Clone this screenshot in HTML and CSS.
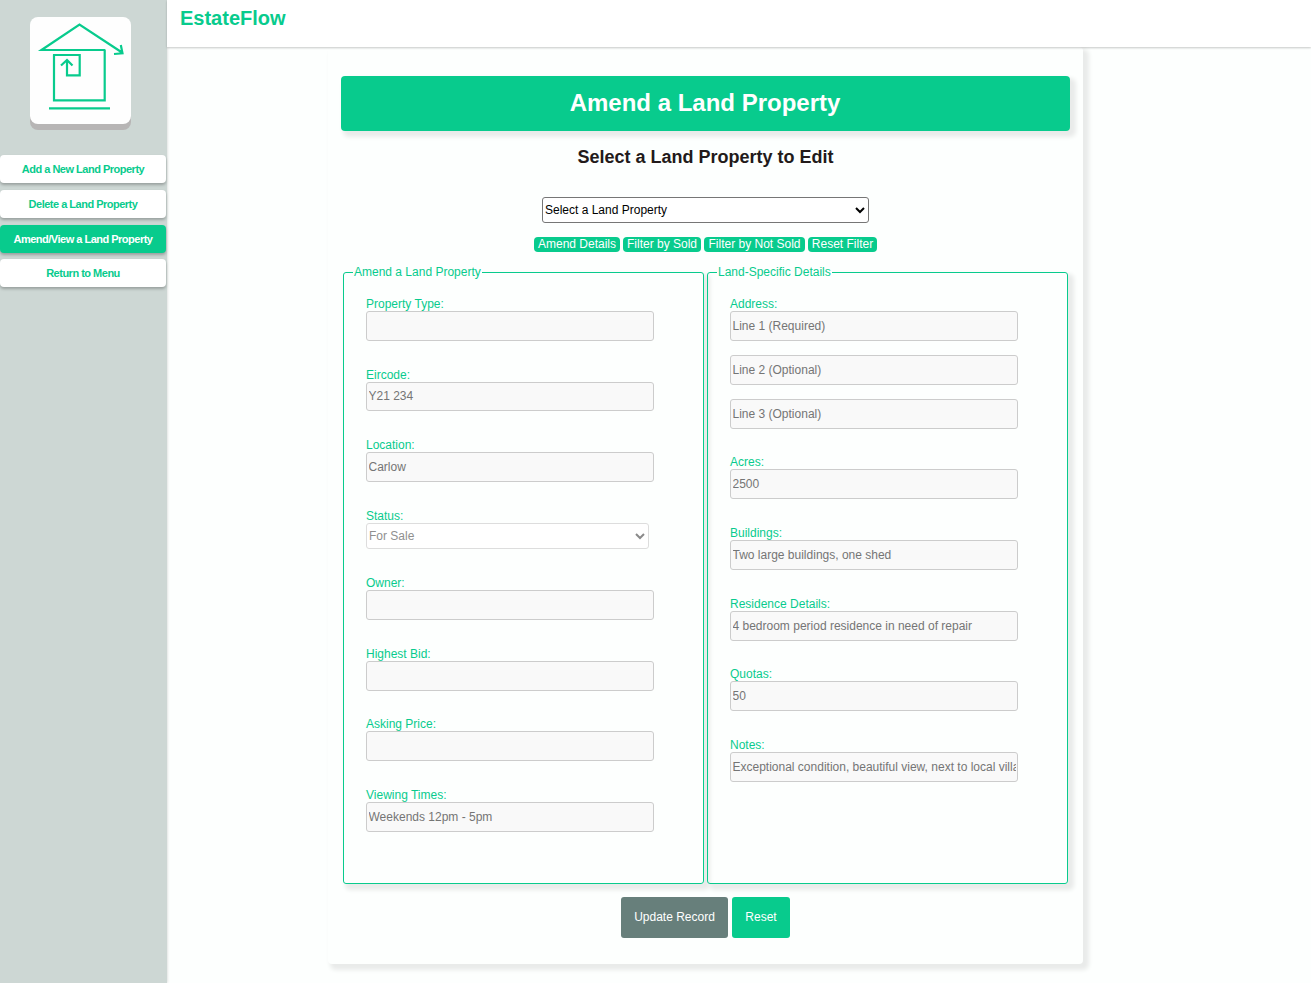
FILE: index.html
```
<!DOCTYPE html>
<html lang="en">
<head>
<meta charset="utf-8">
<title>EstateFlow</title>
<link rel="stylesheet" href="styles.css">
</head>
<body>
<div class="app">
  <aside class="sidebar">
    <div class="logo">
      <svg width="101" height="107" viewBox="30 17 101 107" fill="none" stroke="#08cb8d" stroke-width="2.2">
        <path d="M105 50H41.500L79.500 24.500L122 52.500M120.800 45L122.500 53.300L114 54"/>
        <path d="M54 54.500V100.300H104.700V49.500"/>
        <path d="M53 55H79.700V75.300H67V61M61 65.500L67 60L72.500 65.500"/>
        <path d="M49 108.400H110"/>
      </svg>
    </div>
    <nav class="nav">
      <a class="nav-item">Add a New Land Property</a>
      <a class="nav-item">Delete a Land Property</a>
      <a class="nav-item active">Amend/View a Land Property</a>
      <a class="nav-item last">Return to Menu</a>
    </nav>
  </aside>
  <div class="content">
    <header class="header"><span class="brand">EstateFlow</span></header>
    <main class="card">
      <h1 class="banner">Amend a Land Property</h1>
      <h2 class="subtitle">Select a Land Property to Edit</h2>
      <div class="select-wrap picker-wrap">
        <select class="picker"><option>Select a Land Property</option></select>
        <svg class="chevron" width="10" height="7" viewBox="0 0 10 7" fill="none" stroke="#000" stroke-width="2"><path d="M1 1L5 5L9 1"/></svg>
      </div>
      <div class="filters">
        <button class="chip chip-amend">Amend Details</button>
        <button class="chip chip-sold">Filter by Sold</button>
        <button class="chip chip-notsold">Filter by Not Sold</button>
        <button class="chip chip-reset">Reset Filter</button>
      </div>
      <div class="panels">
        <fieldset class="panel">
          <legend>Amend a Land Property</legend>
          <div class="field"><label>Property Type:</label><input disabled></div>
          <div class="field"><label>Eircode:</label><input class="short" value="Y21 234" disabled></div>
          <div class="field"><label>Location:</label><input value="Carlow" disabled></div>
          <div class="field field-select"><label>Status:</label>
            <div class="select-wrap status-wrap">
              <select class="status" disabled><option>For Sale</option></select>
              <svg class="chevron" width="10" height="7" viewBox="0 0 10 7" fill="none" stroke="#8a8a8a" stroke-width="2"><path d="M1 1L5 5L9 1"/></svg>
            </div>
          </div>
          <div class="field"><label>Owner:</label><input disabled></div>
          <div class="field"><label>Highest Bid:</label><input disabled></div>
          <div class="field"><label>Asking Price:</label><input disabled></div>
          <div class="field"><label>Viewing Times:</label><input value="Weekends 12pm - 5pm" disabled></div>
        </fieldset>
        <fieldset class="panel">
          <legend>Land-Specific Details</legend>
          <div class="field field-address"><label>Address:</label><input placeholder="Line 1 (Required)" disabled><input placeholder="Line 2 (Optional)" disabled><input placeholder="Line 3 (Optional)" disabled></div>
          <div class="field"><label>Acres:</label><input value="2500" disabled></div>
          <div class="field"><label>Buildings:</label><input value="Two large buildings, one shed" disabled></div>
          <div class="field"><label>Residence Details:</label><input value="4 bedroom period residence in need of repair" disabled></div>
          <div class="field"><label>Quotas:</label><input value="50" disabled></div>
          <div class="field"><label>Notes:</label><input value="Exceptional condition, beautiful view, next to local village" disabled></div>
        </fieldset>
      </div>
      <div class="actions">
        <button class="btn btn-update">Update Record</button>
        <button class="btn btn-reset">Reset</button>
      </div>
    </main>
  </div>
</div>
</body>
</html>
```
FILE: styles.css
```
* { box-sizing: border-box; }
body {
  margin: 0;
  font-family: "Liberation Sans", Arial, sans-serif;
  font-size: 12px;
  background: #fdfffe;
  overflow: hidden;
}
.app { display: flex; height: 983px; }
.sidebar {
  width: 167px;
  flex: none;
  background: #cdd7d4;
  box-shadow: 0 0 3px rgba(0, 0, 0, .2);
  padding-top: 17px;
}
.logo {
  width: 101px;
  height: 107px;
  margin-left: 30px;
  background: #fefefe;
  border-radius: 8px;
  box-shadow: 0 6px 0 #b7b5b5;
}
.logo svg { display: block; }
.nav { margin-top: 31px; display: flex; flex-direction: column; gap: 7px; }
.nav-item {
  width: 166px;
  height: 28px;
  line-height: 28px;
  text-align: center;
  font-size: 11px;
  font-weight: bold;
  letter-spacing: -.5px;
  color: #08cb8d;
  background: #fff;
  border-radius: 4px;
  box-shadow: 0 2px 3px rgba(0, 0, 0, .25);
}
.nav-item.active { color: #fff; background: #08cb8d; }
.nav-item.last { margin-top: -1px; }
.content { flex: 1; }
.header {
  position: relative;
  height: 47px;
  padding: 7px 13px;
  background: #fff;
  box-shadow: 0 1px 2px rgba(0, 0, 0, .22);
}
.brand { font-size: 20px; line-height: 22px; font-weight: bold; color: #08cb8d; }
.card {
  width: 755px;
  height: 917px;
  margin-left: 161px;
  padding: 29px 13px 0;
  display: flex;
  flex-direction: column;
  align-items: center;
  border-radius: 4px;
  background: #fdfffe;
  box-shadow: 4px 4px 4px 2px #e9ebea;
}
.banner {
  width: 729px;
  height: 55px;
  margin: 0;
  padding-right: 1px;
  line-height: 54px;
  text-align: center;
  font-size: 24px;
  color: #fff;
  background: #08cb8d;
  border-radius: 4px;
  box-shadow: 4px 4px 4px 2px #e9ebea;
}
.subtitle { margin: 15px 0 0; font-size: 18px; line-height: 22px; color: #231a1a; }
.select-wrap { position: relative; height: 26px; }
.select-wrap select {
  display: block;
  width: 100%;
  height: 26px;
  margin: 0;
  appearance: none;
  font: 12px "Liberation Sans", Arial, sans-serif;
  background: #fff;
  border-radius: 3px;
}
.chevron { position: absolute; right: 4px; top: 10px; }
.picker-wrap { width: 327px; margin-top: 29px; }
.select-wrap .picker {
  padding: 0 16px 1px 2px;
  color: #000;
  border: 1px solid #767676;
}
.filters { display: flex; gap: 3px; margin-top: 14px; }
.chip {
  height: 15px;
  padding: 0 0 1px;
  border: 0;
  border-radius: 4px;
  font: 12px/13px "Liberation Sans", Arial, sans-serif;
  color: #fff;
  background: #08cb8d;
}
.chip-amend { width: 86px; }
.chip-sold { width: 78px; }
.chip-notsold { width: 101px; }
.chip-reset { width: 69px; }
.panels { display: flex; gap: 3px; margin-top: 13px; }
.panel {
  width: 361px;
  height: 619px;
  min-width: 0;
  margin: 0;
  padding: 18px 22px 0;
  border: 1px solid #08cb8d;
  border-radius: 3px;
  box-shadow: 4px 4px 4px 2px #e9ebea;
}
.panel legend { margin-left: -13px; padding: 0 1px; line-height: 14px; color: #08cb8d; }
.field { height: 70.67px; }
.field-select { height: 67px; }
.field-address { height: 158.33px; }
.field label { display: block; line-height: 14px; color: #08cb8d; }
.field input {
  display: block;
  width: 288px;
  height: 30px;
  padding: 0 1.5px;
  font: 12px "Liberation Sans", Arial, sans-serif;
  color: #757575;
  background: #f9f9f9;
  border: 1px solid #ccc;
  border-radius: 3px;
}
.field input.short { height: 29.6px; }
.field input::placeholder { color: #757575; }
.field-address input + input { margin-top: 14px; }
.status-wrap { width: 283px; }
.select-wrap .status {
  padding: 0 16px 0 2px;
  color: #8f8f8f;
  border: 1px solid #ddd;
  opacity: 1;
}
.actions { display: flex; gap: 4px; margin-top: 13px; }
.btn {
  height: 41px;
  padding: 0 0 1px;
  border: 0;
  border-radius: 3px;
  font: 12px "Liberation Sans", Arial, sans-serif;
  color: #fff;
}
.btn-update { width: 107px; background: #677f7b; }
.btn-reset { width: 58px; background: #08cb8d; }
```
